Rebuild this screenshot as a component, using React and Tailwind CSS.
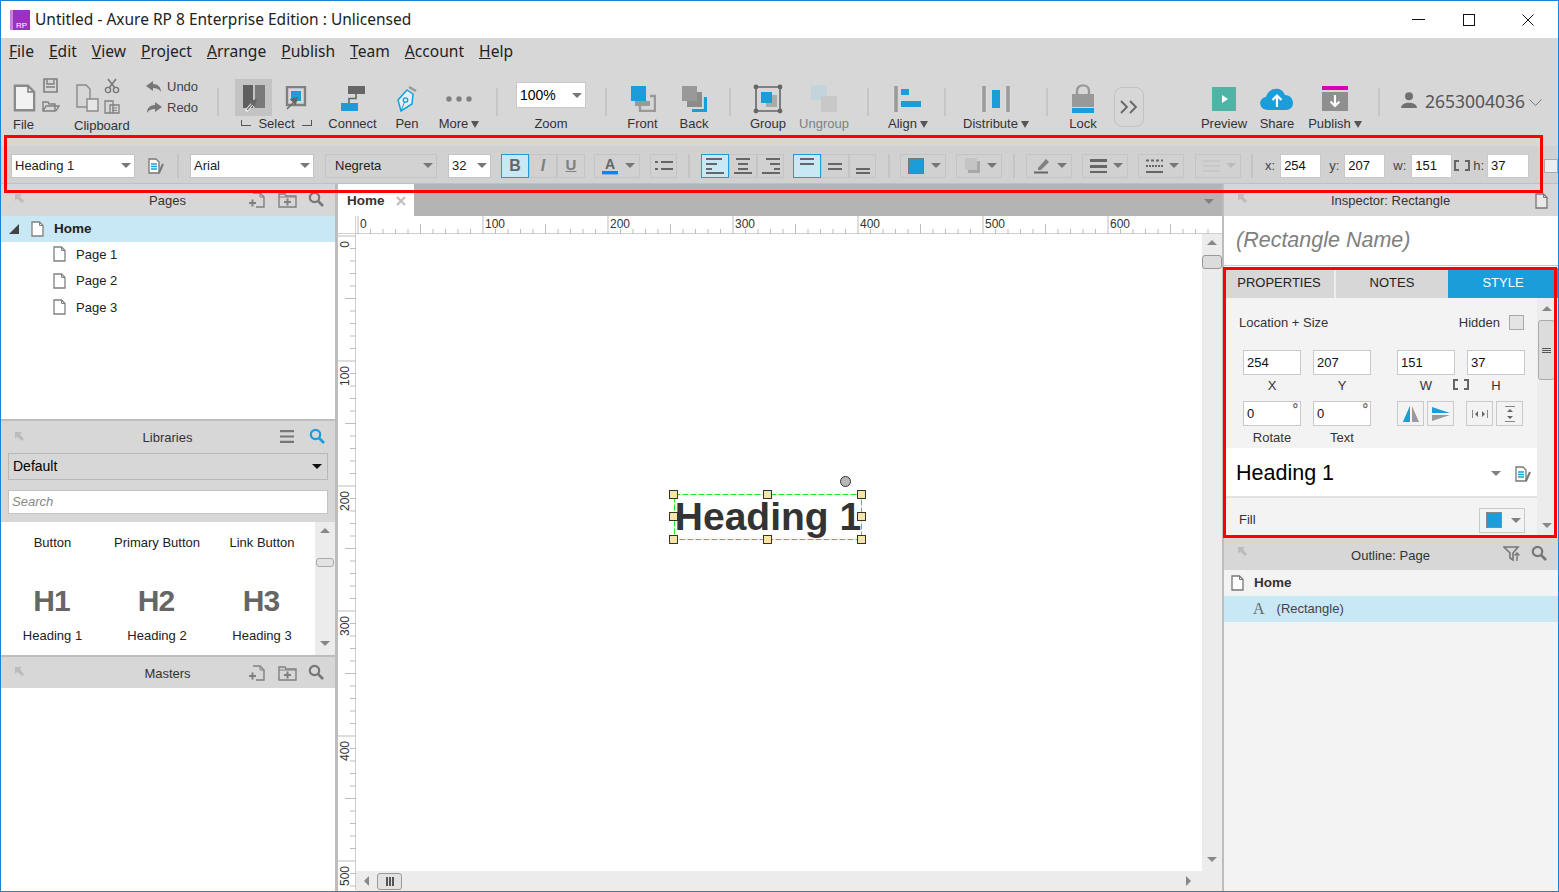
import React from 'react';

const BLUE = '#1a9dd9';

function Caret({ color = '#777', w = 10, h = 5, up }) {
  return (
    <svg width={w} height={h} viewBox="0 0 10 5" preserveAspectRatio="none" className="shrink-0">
      <path d={up ? 'M0 5H10L5 0Z' : 'M0 0H10L5 5Z'} fill={color} />
    </svg>
  );
}

function PageIcon({ w = 13, h = 16, stroke = '#808080', fill = '#fff' }) {
  return (
    <svg width={w} height={h} viewBox="0 0 13 16" className="shrink-0">
      <path d="M1 1H8.5L12 4.5V15H1Z" fill={fill} stroke={stroke} strokeWidth="1.3" />
      <path d="M8.5 1V4.5H12" fill="none" stroke={stroke} strokeWidth="1" />
    </svg>
  );
}

function StyleIcon() {
  return (
    <svg width="18" height="16" viewBox="0 0 18 16" className="shrink-0">
      <path d="M1 1H8L11 4V15H1Z" fill="#fff" stroke="#777" strokeWidth="1.3" />
      <path d="M3 6H9M3 8.5H9M3 11H9" stroke={BLUE} strokeWidth="1.3" />
      <path d="M11 15L15 6" stroke="#777" strokeWidth="2" />
    </svg>
  );
}

function PinIcon() {
  return (
    <svg width="11" height="11" viewBox="0 0 11 11">
      <path d="M1 1H8L5.8 3.2L10 8L8 10L3.2 5.8L1 8Z" fill="#bcbcbc" />
    </svg>
  );
}

function SearchIcon({ color = '#777' }) {
  return (
    <svg width="16" height="16" viewBox="0 0 16 16">
      <circle cx="6.5" cy="6.5" r="4.7" fill="none" stroke={color} strokeWidth="2.2" />
      <path d="M10 10L15 15" stroke={color} strokeWidth="2.6" />
    </svg>
  );
}

function NewPageIcon() {
  return (
    <svg width="17" height="16" viewBox="0 0 17 16">
      <path d="M5 1H12L16 5V15H8" fill="none" stroke="#808080" strokeWidth="1.4" />
      <path d="M12 1V5H16" fill="none" stroke="#808080" strokeWidth="1" />
      <path d="M1 11H8M4.5 7.5V14.5" stroke="#808080" strokeWidth="2" />
    </svg>
  );
}

function NewFolderIcon() {
  return (
    <svg width="19" height="16" viewBox="0 0 19 16">
      <path d="M1 3V15H18V4H8L7 2H1Z" fill="none" stroke="#808080" strokeWidth="1.4" />
      <path d="M1 5H18" stroke="#808080" strokeWidth="1" />
      <path d="M6 10H13M9.5 6.5V13.5" stroke="#808080" strokeWidth="2" />
    </svg>
  );
}

function PanelHeader({ title, right, h = 'h-[32px]', pt = 'pt-[2px]' }) {
  return (
    <div className={`${h} ${pt} bg-[#d7d7d7] relative flex items-center justify-center shrink-0`}>
      <div className="absolute left-[13px] top-[9px]"><PinIcon /></div>
      <span className="text-[13px] text-[#333] -ml-[1px]">{title}</span>
      {right}
    </div>
  );
}

function PagesIcons() {
  return (
    <div className="absolute left-[247px] top-[8px] flex items-center">
      <NewPageIcon />
      <div className="ml-[13px]"><NewFolderIcon /></div>
      <div className="ml-[11px] -mt-[3px]"><SearchIcon /></div>
    </div>
  );
}

function Tool({ w, ml = 0, label, caret, color = '#333', children }) {
  return (
    <div className="flex flex-col items-center shrink-0" style={{ width: w, marginLeft: ml }}>
      <div className="h-[44px] pt-[9px] flex items-center justify-center">{children}</div>
      <div className="h-[16px] flex items-center gap-[3px] text-[13px] whitespace-nowrap" style={{ color }}>
        {label}
        {caret && <Caret color="#555" w={8} h={7} />}
      </div>
    </div>
  );
}

function Sep({ ml = 0, h = 'h-[28px]' }) {
  return <div className={`w-[2px] ${h} bg-[#c6c6c6] shrink-0 self-start mt-[16px]`} style={{ marginLeft: ml }} />;
}

function Toolbar() {
  return (
    <div className="h-[63px] flex shrink-0">
      {/* file group */}
      <div className="w-[71px] shrink-0 relative">
        <div className="absolute left-[12px] top-[12px]"><PageIcon w={23} h={28} stroke="#8a8a8a" fill="#f2f2f2" /></div>
        <svg className="absolute left-[41px] top-[6px]" width="18" height="36" viewBox="0 0 18 36">
          <path d="M2 1H15V14H2Z" fill="#d7d7d7" stroke="#808080" strokeWidth="1.6" />
          <path d="M5 1V6H12V1M4 9H13" stroke="#808080" strokeWidth="1.4" fill="none" />
          <path d="M1 33V24H6L7 26H13V33ZM1 33L4 28H17L14 33" fill="none" stroke="#808080" strokeWidth="1.4" />
        </svg>
        <span className="absolute left-[12px] top-[45px] text-[13px] leading-[16px] text-[#333]">File</span>
      </div>
      {/* clipboard group */}
      <div className="w-[60px] shrink-0 relative">
        <div className="absolute left-[4px] top-[12px]">
          <svg width="24" height="28" viewBox="0 0 24 28">
            <path d="M1 1H10L14 5V23H1Z" fill="none" stroke="#8a8a8a" strokeWidth="1.4" />
            <path d="M11 15H22V27H11Z" fill="#e6e6e6" stroke="#8a8a8a" strokeWidth="1.4" />
          </svg>
        </div>
        <svg className="absolute left-[32px] top-[6px]" width="16" height="36" viewBox="0 0 16 36">
          <circle cx="4" cy="12" r="2.6" fill="none" stroke="#777" strokeWidth="1.4" />
          <circle cx="12" cy="12" r="2.6" fill="none" stroke="#777" strokeWidth="1.4" />
          <path d="M5 10L12 1M11 10L4 1" stroke="#777" strokeWidth="1.5" />
          <path d="M1 23H9V35H1ZM6 27H15V35H6Z" fill="#d7d7d7" stroke="#808080" strokeWidth="1.3" />
          <path d="M8 30H13M8 32.5H13" stroke="#808080" />
        </svg>
        <span className="absolute left-[2px] top-[46px] text-[13px] leading-[16px] text-[#333] whitespace-nowrap">Clipboard</span>
      </div>
      {/* undo redo */}
      <div className="w-[85px] shrink-0 pl-[14px] pt-[7px] flex flex-col gap-[6px] text-[13px] text-[#444]">
        <div className="flex items-center gap-[5px] h-[15px]">
          <svg width="16" height="12" viewBox="0 0 16 12"><path d="M7 0L0 5L7 10V7C11 7 13 8 15 11C15 6 12 3 7 3Z" fill="#777" /></svg>
          Undo
        </div>
        <div className="flex items-center gap-[5px] h-[15px]">
          <svg width="16" height="12" viewBox="0 0 16 12"><path d="M9 0L16 5L9 10V7C5 7 3 8 1 11C1 6 4 3 9 3Z" fill="#777" /></svg>
          Redo
        </div>
      </div>
      <Sep />
      {/* select group */}
      <div className="w-[106px] shrink-0">
        <div className="h-[44px] flex items-start pt-[7px] pl-[16px]">
          <div className="w-[37px] h-[37px] bg-[#c3c3c3] flex items-center justify-center">
            <svg width="24" height="28" viewBox="0 0 24 28">
              <path d="M1 1H11V24H1Z" fill="#5f5f5f" />
              <path d="M13 1H23V24H13Z" fill="#7a7a7a" />
              <path d="M4 27L12 18" stroke="#fff" strokeWidth="3" />
              <path d="M5 26L11 19M14 16L8 17.5L12.5 22Z" stroke="#666" strokeWidth="1.3" fill="#666" />
            </svg>
          </div>
          <svg className="ml-[13px] mt-[7px]" width="22" height="24" viewBox="0 0 22 24">
            <path d="M2 1H20V19H2Z" fill="#d7d7d7" stroke="#808080" strokeWidth="2.4" />
            <path d="M6 5H16V15H6Z" fill={BLUE} />
            <path d="M2 23L10 15M12 12L6 13.5L10.5 18Z" stroke="#666" strokeWidth="1.3" fill="#666" />
          </svg>
        </div>
        <div className="ml-[22px] w-[71px] h-[16px] flex items-center justify-between text-[13px] text-[#333]">
          <span className="w-[10px] h-[6px] border-l border-b border-[#555] mb-[2px]" />
          Select
          <span className="w-[10px] h-[6px] border-r border-b border-[#555] mb-[2px]" />
        </div>
      </div>
      <Tool w={55} label="Connect">
        <svg width="24" height="25" viewBox="0 0 24 25">
          <path d="M7 0H24V8H7Z" fill="#666" />
          <path d="M15 8V12.5H8V17" fill="none" stroke="#666" strokeWidth="1.6" />
          <path d="M0 17H17V25H0Z" fill={BLUE} />
        </svg>
      </Tool>
      <Tool w={54} label="Pen">
        <svg width="20" height="26" viewBox="0 0 20 26">
          <path d="M12 1L19 5" stroke="#999" strokeWidth="2.5" />
          <path d="M10 4L16 8L15 18L4 25L1 14Z" fill="#e4f0f6" stroke={BLUE} strokeWidth="1.5" />
          <circle cx="8.5" cy="14" r="2.2" fill="none" stroke={BLUE} strokeWidth="1.3" />
          <path d="M4 25L7.5 16" stroke={BLUE} />
        </svg>
      </Tool>
      <Tool w={50} label="More" caret>
        <svg width="26" height="6" viewBox="0 0 26 6">
          <circle cx="3" cy="3" r="2.7" fill="#808080" />
          <circle cx="13" cy="3" r="2.7" fill="#808080" />
          <circle cx="23" cy="3" r="2.7" fill="#808080" />
        </svg>
      </Tool>
      <Sep ml={12} />
      <div className="w-[70px] ml-[18px] shrink-0 flex flex-col items-center">
        <div className="h-[44px] w-full flex items-center pt-[2px]">
          <div className="w-full h-[26px] bg-white border border-[#c9c9c9] flex items-center justify-between pl-[3px] pr-[3px] text-[14px] text-black">
            100%<Caret color="#777" />
          </div>
        </div>
        <div className="h-[16px] flex items-center text-[13px] text-[#333]">Zoom</div>
      </div>
      <Sep ml={19} />
      <Tool w={51} ml={10} label="Front">
        <svg width="26" height="26" viewBox="0 0 26 26">
          <path d="M10 5V25H25V10H20" fill="none" stroke="#999" strokeWidth="2.4" />
          <path d="M5 15V20H20V15" fill="#999" />
          <path d="M1 0H16V15H1Z" fill={BLUE} />
        </svg>
      </Tool>
      <Tool w={50} ml={1} label="Back">
        <svg width="26" height="26" viewBox="0 0 26 26">
          <path d="M6 6H21V21H6Z" fill="#8c8c8c" />
          <path d="M1 0H16V15H1Z" fill="#999" />
          <path d="M11 24.5H24.5V11" fill="none" stroke={BLUE} strokeWidth="3.2" />
        </svg>
      </Tool>
      <Sep ml={10} />
      <Tool w={72} ml={1} label="Group">
        <svg width="30" height="30" viewBox="0 0 30 30">
          <path d="M3 3H27V27H3Z" fill="none" stroke="#666" strokeWidth="1.6" />
          <path d="M13 11H24V23H13Z" fill="#aaa" />
          <path d="M8 8H19V19H8Z" fill={BLUE} />
          <circle cx="3" cy="3" r="2.4" fill="#666" />
          <circle cx="27" cy="3" r="2.4" fill="#666" />
          <circle cx="3" cy="27" r="2.4" fill="#666" />
          <circle cx="27" cy="27" r="2.4" fill="#666" />
        </svg>
      </Tool>
      <Tool w={40} label="Ungroup" color="#808080">
        <svg width="30" height="30" viewBox="0 0 30 30">
          <path d="M2 1H18V16H2Z" fill="#c4d4dc" />
          <path d="M12 12H28V28H12Z" fill="#c8c8c8" />
        </svg>
      </Tool>
      <Sep ml={23} />
      <Tool w={70} ml={4} label="Align" caret>
        <svg width="28" height="26" viewBox="0 0 28 26">
          <path d="M2 0V26" stroke="#999" strokeWidth="3.4" />
          <path d="M7 3H15V9H7ZM7 15H27V21H7Z" fill={BLUE} />
        </svg>
      </Tool>
      <Sep ml={1} />
      <Tool w={100} label="Distribute" caret>
        <svg width="28" height="26" viewBox="0 0 28 26">
          <path d="M2 0V26M26 0V26" stroke="#999" strokeWidth="3.4" />
          <path d="M10 4H18V22H10Z" fill={BLUE} />
        </svg>
      </Tool>
      <Sep />
      <Tool w={42} ml={14} label="Lock">
        <svg width="24" height="29" viewBox="0 0 24 29">
          <path d="M6 12V7C6 -0.5 18 -0.5 18 7V12" fill="none" stroke="#999" strokeWidth="2.4" />
          <path d="M1 10H23V23H1Z" fill="#999" />
          <path d="M1 24H23V29H1Z" fill={BLUE} />
        </svg>
      </Tool>
      <div className="ml-[10px] mt-[15px] w-[30px] h-[40px] border border-[#c2c2c2] rounded-[8px] flex items-center justify-center shrink-0">
        <svg width="18" height="14" viewBox="0 0 18 14">
          <path d="M1 1L7 7L1 13M10 1L16 7L10 13" fill="none" stroke="#666" strokeWidth="1.8" />
        </svg>
      </div>
      <Tool w={48} ml={56} label="Preview">
        <svg width="24" height="24" viewBox="0 0 24 24">
          <path d="M0 0H24V24H0Z" fill="#4fb3a5" />
          <path d="M10 8L16 12L10 16Z" fill="#fff" />
        </svg>
      </Tool>
      <Tool w={48} ml={5} label="Share">
        <svg width="34" height="24" viewBox="0 0 34 24">
          <path d="M8 23C-2 23 -2 11 6 10C8 1 21 -2 25 8C35 8 36 23 26 23Z" fill={BLUE} />
          <path d="M17 20V9M12.5 13L17 8.5L21.5 13" fill="none" stroke="#fff" strokeWidth="2.2" />
        </svg>
      </Tool>
      <Tool w={60} ml={4} label="Publish" caret>
        <svg width="26" height="26" viewBox="0 0 26 26">
          <path d="M0 0H26V4H0Z" fill="#d900b5" />
          <path d="M0 6H26V25H0Z" fill="#8f8f8f" />
          <path d="M13 9V20M8.5 15.5L13 20L17.5 15.5" fill="none" stroke="#fff" strokeWidth="2.2" />
        </svg>
      </Tool>
      <Sep ml={13} />
      <div className="flex items-start pt-[18px] shrink-0">
        <svg className="ml-[21px] mt-[2px]" width="16" height="16" viewBox="0 0 16 16">
          <circle cx="8" cy="4.2" r="4" fill="#707070" />
          <path d="M0 16C0 9 16 9 16 16Z" fill="#707070" />
        </svg>
        <span className="ml-[8px] text-[17.5px] leading-[22px] text-[#555] font-['Noto_Sans',sans-serif]">2653004036</span>
        <svg className="ml-[4px] mt-[9px]" width="13" height="7" viewBox="0 0 13 7">
          <path d="M0.5 0.5L6.5 6.5L12.5 0.5" fill="none" stroke="#777" />
        </svg>
      </div>
    </div>
  );
}

function Drop({ w, ml, white = true, children, caretColor = '#777' }) {
  return (
    <div
      className={`h-[24px] border border-[#c4c4c4] flex items-center justify-between pl-[3px] pr-[3px] text-[13px] text-[#222] shrink-0 ${white ? 'bg-white' : 'bg-[#d2d2d2]'}`}
      style={{ width: w, marginLeft: ml }}
    >
      <span>{children}</span>
      <Caret color={caretColor} />
    </div>
  );
}

function Btn({ on, w = 28, children }) {
  return (
    <div
      className={`h-[24px] border flex items-center justify-center shrink-0 ${on ? 'border-[#1a9dd9] bg-[#c8e8f6]' : 'border-[#c4c4c4]'}`}
      style={{ width: w }}
    >
      {children}
    </div>
  );
}

function Lines({ rows, w = 20, color = '#666' }) {
  return (
    <svg width={w} height="18" viewBox={`0 0 ${w} 18`}>
      {rows.map((r, i) => (
        <rect key={i} x={r[0]} y={r[1]} width={r[2]} height="2" fill={color} />
      ))}
    </svg>
  );
}

function CaretBtn({ w = 46, ml, dim, children }) {
  return (
    <div
      className="h-[24px] border border-[#c4c4c4] flex items-center justify-between pl-[7px] pr-[4px] shrink-0"
      style={{ width: w, marginLeft: ml }}
    >
      {children}
      <Caret color={dim ? '#bbb' : '#777'} />
    </div>
  );
}

function VSep({ ml }) {
  return <div className="w-[2px] h-[24px] bg-[#c4c4c4] shrink-0" style={{ marginLeft: ml }} />;
}

function CoordField({ label, value, labelMl, w = 41, ml = 5 }) {
  return (
    <>
      <span className="text-[13px] text-[#444] shrink-0" style={{ marginLeft: labelMl }}>{label}</span>
      <div
        className="h-[24px] bg-white border border-[#c9c9c9] flex items-center pl-[3px] text-[13px] text-[#111] shrink-0"
        style={{ width: w, marginLeft: ml }}
      >
        {value}
      </div>
    </>
  );
}

function LinkIcon({ color = '#666' }) {
  return (
    <svg width="16" height="11" viewBox="0 0 16 11" className="shrink-0">
      <path d="M5 1H1V10H5M11 1H15V10H11" fill="none" stroke={color} strokeWidth="2" />
    </svg>
  );
}

function FormatBar() {
  return (
    <div className="h-[38px] pt-[2px] bg-[#d1d1d1] border-b border-[#c0c0c0] flex items-center pl-[10px] shrink-0">
      <Drop w={124}>Heading 1</Drop>
      <div className="ml-[13px]"><StyleIcon /></div>
      <VSep ml={11} />
      <Drop w={124} ml={11}>Arial</Drop>
      <Drop w={112} ml={11} white={false}><span className="pl-[6px]">Negreta</span></Drop>
      <Drop w={43} ml={11}>32</Drop>
      <div className="flex ml-[10px]">
        <Btn on><span className="font-bold text-[16px] text-[#666]">B</span></Btn>
        <Btn><span className="italic font-bold text-[16px] text-[#808080]">I</span></Btn>
        <Btn><span className="font-bold text-[15px] text-[#808080] underline">U</span></Btn>
      </div>
      <CaretBtn ml={9}>
        <svg width="16" height="18" viewBox="0 0 16 18">
          <text x="8" y="12" textAnchor="middle" fontSize="14" fontWeight="700" fill="#666" fontFamily="Liberation Sans">A</text>
          <rect x="0" y="14" width="16" height="3.4" fill="#0a84ff" />
        </svg>
      </CaretBtn>
      <div className="ml-[10px]">
        <Btn w={27}><Lines w={18} rows={[[0, 4, 3], [6, 4, 12], [0, 11, 3], [6, 11, 12]]} /></Btn>
      </div>
      <VSep ml={11} />
      <div className="flex ml-[11px]">
        <Btn on><Lines rows={[[1, 1, 16], [1, 6, 11], [1, 11, 6], [1, 15, 18]]} /></Btn>
        <Btn><Lines rows={[[3, 1, 14], [5, 6, 10], [5, 11, 10], [1, 15, 18]]} /></Btn>
        <Btn w={27}><Lines rows={[[5, 1, 14], [9, 6, 10], [13, 11, 6], [1, 15, 18]]} /></Btn>
      </div>
      <div className="flex ml-[9px]">
        <Btn on><Lines rows={[[3, 1, 14], [3, 6, 14]]} /></Btn>
        <Btn><Lines rows={[[3, 6, 14], [3, 11, 14]]} /></Btn>
        <Btn w={27}><Lines rows={[[3, 11, 14], [3, 15, 14]]} /></Btn>
      </div>
      <VSep ml={12} />
      <CaretBtn ml={10}><div className="w-[16px] h-[16px] bg-[#1a9dd9] border border-[#777]" /></CaretBtn>
      <CaretBtn ml={10}>
        <svg width="17" height="17" viewBox="0 0 17 17">
          <path d="M4 4H16V16H4Z" fill="#a8a8a8" />
          <path d="M1 1H13V13H1Z" fill="#c4c4c4" />
        </svg>
      </CaretBtn>
      <VSep ml={11} />
      <CaretBtn ml={11}>
        <svg width="18" height="17" viewBox="0 0 18 17">
          <path d="M4 11L12 2L15 5L7 13H4Z" fill="#808080" />
          <path d="M0 15.5H14" stroke="#666" strokeWidth="2" />
        </svg>
      </CaretBtn>
      <CaretBtn ml={10}><Lines w={17} rows={[[0, 2, 17], [0, 3, 17], [0, 8, 17], [0, 9, 17], [0, 14, 17]]} /></CaretBtn>
      <CaretBtn ml={10}>
        <svg width="17" height="18" viewBox="0 0 17 18">
          <path d="M0 3.5H17" stroke="#666" strokeWidth="2" strokeDasharray="3 2" />
          <path d="M0 9H17" stroke="#666" strokeWidth="2" strokeDasharray="2 1" />
          <path d="M0 15H17" stroke="#666" strokeWidth="2" />
        </svg>
      </CaretBtn>
      <CaretBtn ml={11} dim>
        <svg width="17" height="16" viewBox="0 0 17 16">
          <path d="M0 3H17M0 8H17M0 13H17" stroke="#bdbdbd" strokeWidth="1.2" />
        </svg>
      </CaretBtn>
      <VSep ml={10} />
      <CoordField label="x:" value="254" labelMl={12} />
      <CoordField label="y:" value="207" labelMl={8} />
      <CoordField label="w:" value="151" labelMl={8} />
      <div className="ml-[2px]"><LinkIcon /></div>
      <CoordField label="h:" value="37" labelMl={3} w={42} ml={3} />
      <div className="ml-[15px] w-[14px] h-[14px] bg-[#eee] border border-[#aaa] shrink-0" />
    </div>
  );
}

function Pages() {
  const rows = ['Page 1', 'Page 2', 'Page 3'];
  return (
    <>
      <PanelHeader title="Pages" right={<PagesIcons />} />
      <div className="h-[203px] bg-white text-[13px] text-[#222] shrink-0">
        <div className="h-[26px] bg-[#c8e8f6] flex items-center pl-[8px]">
          <svg width="11" height="10" viewBox="0 0 11 10"><path d="M10 0V10H0Z" fill="#444" /></svg>
          <div className="ml-[11px]"><PageIcon /></div>
          <span className="ml-[10px] font-bold text-[13.5px]">Home</span>
        </div>
        <div className="-mt-[1px]">
          {rows.map((p) => (
            <div key={p} className="h-[26.5px] flex items-center pl-[52px]">
              <PageIcon />
              <span className="ml-[10px]">{p}</span>
            </div>
          ))}
        </div>
      </div>
    </>
  );
}

function ScrollV({ w = 20, children }) {
  return (
    <div className="bg-[#ececec] relative shrink-0 h-full" style={{ width: w }}>
      <div className="absolute left-[5px] top-[6px]"><Caret color="#888" up /></div>
      {children}
    </div>
  );
}

function Libraries() {
  const rows = [
    ['H1', 'Heading 1'],
    ['H2', 'Heading 2'],
    ['H3', 'Heading 3'],
  ];
  return (
    <>
      <div className="h-[2px] bg-[#bdbdbd] shrink-0" />
      <div className="h-[101px] bg-[#d7d7d7] relative shrink-0">
        <div className="h-[32px] pt-[2px] flex items-center justify-center relative">
          <div className="absolute left-[13px] top-[10px]"><PinIcon /></div>
          <span className="text-[13px] text-[#333] -ml-[1px]">Libraries</span>
          <svg className="absolute left-[279px] top-[9px]" width="14" height="13" viewBox="0 0 14 13">
            <path d="M0 1.2H14M0 6.5H14M0 11.8H14" stroke="#777" strokeWidth="2.2" />
          </svg>
          <div className="absolute left-[308px] top-[7px]"><SearchIcon color={BLUE} /></div>
        </div>
        <div className="mx-[7px] h-[27px] border border-[#b8b8b8] flex items-center justify-between pl-[4px] pr-[5px] text-[14px] text-black">
          Default<Caret color="#111" />
        </div>
        <div className="mx-[7px] mt-[10px] h-[24px] bg-white border border-[#c4c4c4] flex items-center pl-[3px] text-[13px] italic text-[#888]">
          Search
        </div>
      </div>
      <div className="h-[133px] bg-white flex shrink-0 text-[13px] text-[#222]">
        <div className="flex-1">
          <div className="grid grid-cols-[103px_106px_104px] pt-[13px]">
            {['Button', 'Primary Button', 'Link Button'].map((b) => (
              <div key={b} className="text-center leading-[15px]">{b}</div>
            ))}
          </div>
          <div className="grid grid-cols-[103px_106px_104px] mt-[35px]">
            {rows.map(([h, t]) => (
              <div key={h} className="flex flex-col items-center">
                <span className="font-bold text-[30px] leading-[32px] tracking-[-1px] text-[#666] -ml-[2px]">{h}</span>
                <span className="mt-[11px] leading-[15px]">{t}</span>
              </div>
            ))}
          </div>
        </div>
        <ScrollV>
          <div className="absolute left-[1px] top-[36px] w-[18px] h-[9px] border border-[#aaa] rounded-[3px] bg-[#e2e2e2]" />
          <div className="absolute left-[5px] bottom-[9px]"><Caret color="#888" /></div>
        </ScrollV>
      </div>
    </>
  );
}

function LeftPanel() {
  return (
    <div className="w-[334px] shrink-0 flex flex-col bg-white">
      <Pages />
      <Libraries />
      <div className="h-[2px] bg-[#bdbdbd] shrink-0" />
      <PanelHeader title="Masters" h="h-[31px]" right={<PagesIcons />} />
      <div className="flex-1 bg-white" />
    </div>
  );
}

function HRuler() {
  const ticks = Array.from({ length: 69 }, (_, i) => i);
  return (
    <svg width="866" height="18" viewBox="0 0 866 18" className="block">
      <path d="M0 17.5H866" stroke="#cfcfcf" />
      {ticks.map((i) => {
        const x = 2 + i * 12.5;
        const h = i % 10 === 0 ? 18 : i % 5 === 0 ? 10 : 5;
        return <path key={i} d={`M${x} 18V${18 - h}`} stroke="#bdbdbd" />;
      })}
      {[0, 100, 200, 300, 400, 500, 600].map((n, i) => (
        <text key={n} x={2 + i * 125 + 2} y="12" fontSize="12" fill="#333" fontFamily="Liberation Sans">{n}</text>
      ))}
    </svg>
  );
}

function VRuler() {
  const ticks = Array.from({ length: 54 }, (_, i) => i);
  return (
    <svg width="18" height="656" viewBox="0 0 18 656" className="block shrink-0">
      <path d="M17.5 0V656" stroke="#cfcfcf" />
      {ticks.map((i) => {
        const y = 2 + i * 12.5;
        const w = i % 10 === 0 ? 18 : i % 5 === 0 ? 11 : 6;
        return <path key={i} d={`M18 ${y}H${18 - w}`} stroke="#bdbdbd" />;
      })}
      {[0, 100, 200, 300, 400, 500].map((n, i) => (
        <text
          key={n}
          transform={`translate(11 ${2 + i * 125 + 5}) rotate(-90)`}
          textAnchor="end"
          fontSize="12"
          fill="#333"
          fontFamily="Liberation Sans"
        >
          {n}
        </text>
      ))}
    </svg>
  );
}

function Handle({ cls }) {
  return <div className={`absolute w-[9px] h-[9px] bg-[#f5e6a8] border border-[#333] ${cls}`} />;
}

function CanvasArea() {
  return (
    <div className="w-[884px] shrink-0 flex flex-col bg-white">
      <div className="h-[32px] bg-[#b4b4b4] flex shrink-0 relative">
        <div className="w-[76px] pt-[2px] bg-white flex items-center text-[13.5px] font-bold text-[#333] pl-[9px]">
          Home
          <svg className="ml-[11px]" width="10" height="10" viewBox="0 0 10 10">
            <path d="M1 1L9 9M9 1L1 9" stroke="#c0c0c0" strokeWidth="2.2" />
          </svg>
        </div>
        <div className="absolute right-[8px] top-[15px]"><Caret color="#808080" /></div>
      </div>
      <div className="flex shrink-0">
        <div className="w-[18px] h-[18px] border-r border-b border-[#d0d0d0]" />
        <HRuler />
      </div>
      <div className="flex-1 flex min-h-0">
        <VRuler />
        <div className="flex-1 flex flex-col min-w-0">
          <div className="flex-1 flex min-h-0">
            <div className="flex-1 relative bg-white">
              {/* selected widget */}
              <div className="absolute left-[318px] top-[260px] w-[188px] h-[46px] flex items-center justify-center">
                <svg className="absolute left-0 top-0" width="188" height="46" viewBox="0 0 188 46">
                  <rect x="0.5" y="0.5" width="187" height="45" fill="none" stroke="#22e622" strokeDasharray="6 2" />
                </svg>
                <span className="relative font-bold text-[39px] leading-[46px] text-[#333] whitespace-nowrap -mt-[1px]">Heading 1</span>
                <Handle cls="-left-[5px] -top-[4px]" />
                <Handle cls="left-[89px] -top-[4px]" />
                <Handle cls="-right-[4px] -top-[4px]" />
                <Handle cls="-left-[5px] top-[18px]" />
                <Handle cls="-right-[4px] top-[18px]" />
                <Handle cls="-left-[5px] -bottom-[4px]" />
                <Handle cls="left-[89px] -bottom-[4px]" />
                <Handle cls="-right-[4px] -bottom-[4px]" />
                <div className="absolute left-[166px] -top-[18px] w-[11px] h-[11px] rounded-full bg-[#b8b8b8] border border-[#333]" />
              </div>
            </div>
            <ScrollV>
              <div className="absolute left-[0px] top-[21px] w-[20px] h-[14px] border border-[#999] rounded-[3px] bg-[#dcdcdc]" />
              <div className="absolute left-[5px] bottom-[9px]"><Caret color="#888" /></div>
            </ScrollV>
          </div>
          <div className="h-[20px] bg-[#ececec] relative flex items-center shrink-0">
            <svg className="ml-[8px]" width="5" height="10" viewBox="0 0 5 10"><path d="M5 0V10L0 5Z" fill="#888" /></svg>
            <div className="ml-[8px] w-[25px] h-[17px] border border-[#999] rounded-[3px] bg-[#e2e2e2] flex items-center justify-center gap-[1px]">
              <span className="w-[2px] h-[9px] bg-[#555]" />
              <span className="w-[2px] h-[9px] bg-[#555]" />
              <span className="w-[2px] h-[9px] bg-[#555]" />
            </div>
            <svg className="absolute right-[31px] top-[5px]" width="5" height="10" viewBox="0 0 5 10"><path d="M0 0V10L5 5Z" fill="#888" /></svg>
          </div>
        </div>
      </div>
    </div>
  );
}

function SmallField({ w = 58, value, deg }) {
  return (
    <div
      className="h-[25px] bg-white border border-[#c9c9c9] relative flex items-center pl-[3px] text-[13px] text-[#111] shrink-0"
      style={{ width: w }}
    >
      {value}
      {deg && <span className="absolute right-[2px] top-[-3px] text-[14px] font-bold text-[#666]">°</span>}
    </div>
  );
}

function IconBtn({ children }) {
  return <div className="w-[27px] h-[25px] border border-[#c9c9c9] flex items-center justify-center shrink-0">{children}</div>;
}

function StyleTab() {
  return (
    <div className="flex h-[239px] shrink-0">
      <div className="w-[313px] bg-[#f3f3f3] shrink-0 flex flex-col">
        <div className="h-[52px] pb-[3px] flex items-center justify-between pl-[15px] pr-[13px] text-[13px] text-[#333] shrink-0">
          Location + Size
          <div className="flex items-center gap-[9px]">
            Hidden
            <div className="w-[15px] h-[15px] border border-[#aaa] bg-[#e4e4e4]" />
          </div>
        </div>
        <div className="flex pl-[19px] shrink-0">
          <SmallField value="254" />
          <div className="ml-[12px]"><SmallField value="207" /></div>
          <div className="ml-[26px]"><SmallField value="151" /></div>
          <div className="ml-[12px]"><SmallField value="37" /></div>
        </div>
        <div className="flex pl-[19px] h-[22px] mb-[4px] items-center text-[13px] text-[#333] shrink-0">
          <span className="w-[58px] text-center">X</span>
          <span className="ml-[12px] w-[58px] text-center">Y</span>
          <span className="ml-[26px] w-[58px] text-center">W</span>
          <span className="ml-[-2px] w-[14px] -mt-[3px]"><LinkIcon /></span>
          <span className="w-[58px] text-center">H</span>
        </div>
        <div className="flex pl-[19px] shrink-0">
          <SmallField value="0" deg />
          <div className="ml-[12px]"><SmallField value="0" deg /></div>
          <div className="ml-[26px] flex gap-[3px]">
            <IconBtn>
              <svg width="18" height="16" viewBox="0 0 18 16"><path d="M8 0V16H1ZM10 0V16H17Z" fill="#9a9a9a" /><path d="M8 0V16H1Z" fill={BLUE} /></svg>
            </IconBtn>
            <IconBtn>
              <svg width="18" height="16" viewBox="0 0 18 16"><path d="M0 1L18 7H0Z" fill={BLUE} /><path d="M0 9H18L0 15Z" fill="#9a9a9a" /></svg>
            </IconBtn>
          </div>
          <div className="ml-[12px] flex gap-[3px]">
            <IconBtn>
              <svg width="16" height="8" viewBox="0 0 16 8"><path d="M0.5 0V8M15.5 0V8" stroke="#888" /><path d="M3 4L6 1V7ZM13 4L10 1V7Z" fill="#666" /></svg>
            </IconBtn>
            <IconBtn>
              <svg width="10" height="16" viewBox="0 0 10 16"><path d="M0 0.5H10M0 15.5H10" stroke="#888" /><path d="M5 3L8 6H2ZM5 13L2 10H8Z" fill="#666" /></svg>
            </IconBtn>
          </div>
        </div>
        <div className="flex pl-[19px] h-[22px] pt-[2px] items-center text-[13px] text-[#333] shrink-0">
          <span className="w-[58px] text-center">Rotate</span>
          <span className="ml-[12px] w-[58px] text-center">Text</span>
        </div>
        <div className="h-[50px] pt-[3px] bg-white border-b-2 border-[#e2e2e2] flex items-center pl-[12px] pr-[4px] shrink-0">
          <span className="text-[21.5px] text-black flex-1">Heading 1</span>
          <Caret color="#808080" />
          <div className="ml-[14px]"><StyleIcon /></div>
        </div>
        <div className="flex-1 pt-[5px] flex items-center justify-between pl-[15px] pr-[12px] text-[13px] text-[#333]">
          Fill
          <div className="w-[46px] h-[25px] border border-[#c9c9c9] flex items-center pl-[6px] gap-[9px]">
            <div className="w-[16px] h-[16px] bg-[#1a9dd9] border border-[#888]" />
            <Caret color="#808080" />
          </div>
        </div>
      </div>
      <div className="w-[19px] bg-[#ececec] relative shrink-0">
        <div className="absolute left-[5px] top-[8px]"><Caret color="#888" up /></div>
        <div className="absolute left-[1px] top-[22px] w-[17px] h-[60px] border border-[#aaa] rounded-[3px] bg-[#dcdcdc] flex flex-col items-center justify-center gap-[1px]">
          <span className="w-[9px] h-[1px] bg-[#555]" />
          <span className="w-[9px] h-[1px] bg-[#555]" />
          <span className="w-[9px] h-[1px] bg-[#555]" />
        </div>
        <div className="absolute left-[5px] bottom-[9px]"><Caret color="#888" /></div>
      </div>
    </div>
  );
}

function RightPanel() {
  return (
    <div className="w-[334px] shrink-0 flex flex-col bg-[#f3f3f3]">
      <PanelHeader
        title="Inspector: Rectangle"
        right={<div className="absolute right-[10px] top-[9px]"><PageIcon stroke="#777" fill="#e8e8e8" /></div>}
      />
      <div className="h-[49px] bg-white flex items-center pl-[12px] text-[21.5px] italic text-[#808080] shrink-0">(Rectangle Name)</div>
      <div className="h-[3px] bg-white border-t border-[#c9c9c9] shrink-0" />
      <div className="h-[30px] flex shrink-0 text-[13px]">
        <div className="w-[112px] bg-[#d7d7d7] flex items-center justify-center text-[#222] border-r-2 border-[#ececec]">PROPERTIES</div>
        <div className="w-[112px] bg-[#d7d7d7] flex items-center justify-center text-[#222]">NOTES</div>
        <div className="flex-1 bg-[#1a9dd9] flex items-center justify-center text-white">STYLE</div>
      </div>
      <StyleTab />
      <PanelHeader
        title="Outline: Page"
        h="h-[33px]"
        pt="pt-[4px]"
        right={
          <div className="absolute left-[279px] top-[9px] flex items-center">
            <svg width="18" height="16" viewBox="0 0 18 16">
              <path d="M1 1H15L10 7V14L7 12V7Z" fill="none" stroke="#777" strokeWidth="1.6" />
              <path d="M14 15V7M11.5 9.5L14 7L16.5 9.5" fill="none" stroke="#777" strokeWidth="1.4" />
            </svg>
            <div className="ml-[10px] -mt-[2px]"><SearchIcon /></div>
          </div>
        }
      />
      <div className="h-[26px] flex items-center pl-[7px] text-[13.5px] font-bold text-[#333] shrink-0">
        <PageIcon stroke="#777" />
        <span className="ml-[10px]">Home</span>
      </div>
      <div className="h-[26px] bg-[#c8e8f6] flex items-center pl-[29px] text-[13px] text-[#444] shrink-0">
        <span className="font-['Liberation_Serif',serif] text-[16px] text-[#666] leading-[16px]">A</span>
        <span className="ml-[12px]">(Rectangle)</span>
      </div>
      <div className="flex-1" />
    </div>
  );
}

export default function App() {
  return (
    <div className="relative w-[1559px] h-[892px] bg-[#d7d7d7] border border-[#1883d7] overflow-hidden flex flex-col font-['Liberation_Sans',Arial,sans-serif]">
      {/* title bar */}
      <div className="h-[37px] bg-white flex items-center shrink-0">
        <svg className="ml-[9px]" width="20" height="20" viewBox="0 0 20 20">
          <path d="M0 0H20V20H0Z" fill="#9b30c4" />
          <path d="M0 0H3V20H0Z" fill="#c77fe0" />
          <text x="6" y="18" fontSize="8" fill="#fff" fontFamily="Liberation Sans">RP</text>
        </svg>
        <span className="ml-[5px] text-[15.5px] text-[#222] font-['Noto_Sans',sans-serif]">Untitled - Axure RP 8 Enterprise Edition : Unlicensed</span>
        <div className="ml-auto flex items-center pr-[24px]">
          <span className="w-[13px] h-[1px] bg-[#111]" />
          <span className="ml-[38px] w-[12px] h-[12px] border border-[#111]" />
          <svg className="ml-[47px]" width="12" height="12" viewBox="0 0 12 12">
            <path d="M0.5 0.5L11.5 11.5M11.5 0.5L0.5 11.5" stroke="#111" />
          </svg>
        </div>
      </div>
      {/* menu */}
      <div className="h-[34px] pb-[6px] flex items-center pl-[8px] gap-[15px] text-[15.6px] text-[#222] font-['Noto_Sans',sans-serif] shrink-0">
        {['File', 'Edit', 'View', 'Project', 'Arrange', 'Publish', 'Team', 'Account', 'Help'].map((m) => (
          <span key={m}><u>{m[0]}</u>{m.slice(1)}</span>
        ))}
      </div>
      <Toolbar />
      <div className="h-[11px] shrink-0" />
      <FormatBar />
      <div className="flex-1 flex min-h-0">
        <LeftPanel />
        <div className="w-[3px] bg-[#bdbdbd] shrink-0" />
        <CanvasArea />
        <div className="w-[2px] bg-[#bdbdbd] shrink-0" />
        <RightPanel />
      </div>
      {/* red annotation boxes */}
      <div className="absolute left-[3px] top-[134px] w-[1539px] h-[58px] border-[3px] border-[#ff0000]" />
      <div className="absolute left-[1222px] top-[266px] w-[334px] h-[271px] border-[3px] border-[#ff0000]" />
    </div>
  );
}
